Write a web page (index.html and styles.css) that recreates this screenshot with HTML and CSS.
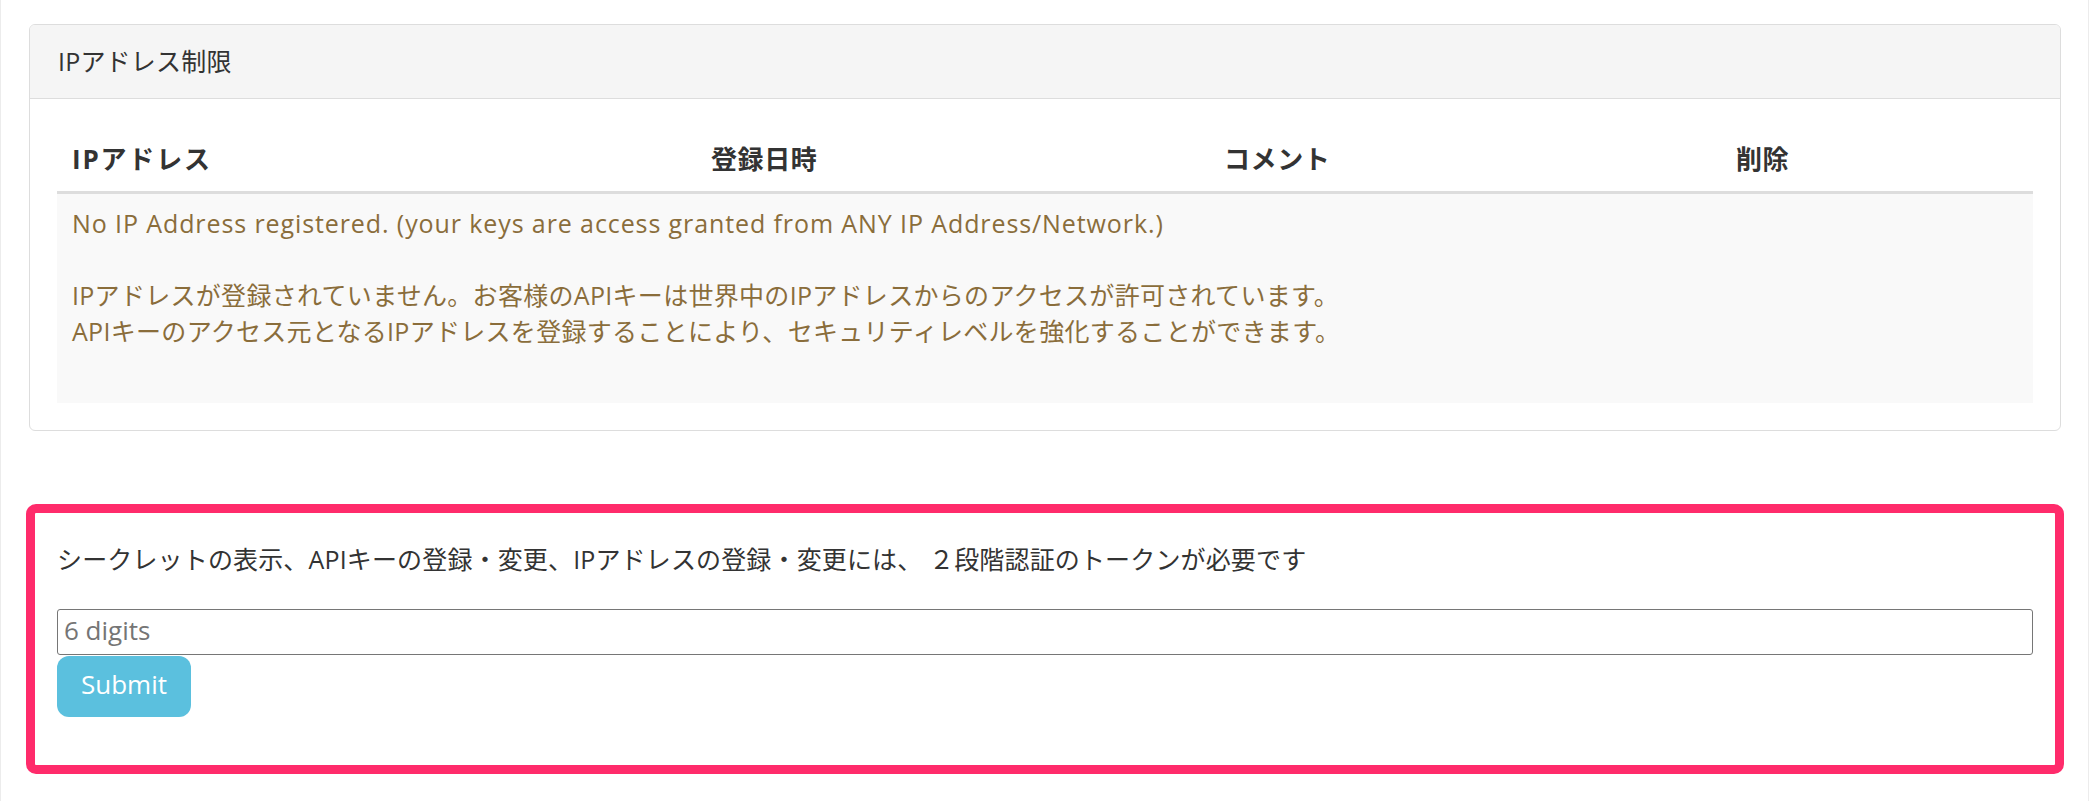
FILE: index.html
```html
<!DOCTYPE html>
<html lang="ja">
  <head>
    <meta charset="utf-8">
    <title>IPアドレス制限</title>
    <link rel="stylesheet" href="styles.css">
  </head>
  <body>
    <div class="page">
      <div class="panel">
        <div class="panel-heading">IPアドレス制限</div>
        <div class="panel-body">
          <table class="ip-table">
            <colgroup>
              <col class="col-ip">
              <col class="col-date">
              <col class="col-comment">
              <col>
            </colgroup>
            <thead>
              <tr>
                <th class="th-ip">IPアドレス</th>
                <th>登録日時</th>
                <th>コメント</th>
                <th>削除</th>
              </tr>
            </thead>
            <tbody>
              <tr>
                <td colspan="4" class="empty"><span class="en">No IP Address registered. (your keys are access granted from ANY IP Address/Network.)</span><br><br>IPアドレスが登録されていません。お客様のAPIキーは世界中のIPアドレスからのアクセスが許可されています。<br>APIキーのアクセス元となるIPアドレスを登録することにより、セキュリティレベルを強化することができます。</td>
              </tr>
            </tbody>
          </table>
        </div>
      </div>

      <form class="otp-box" onsubmit="return false">
        <p class="otp-note">シークレットの表示、APIキーの登録・変更、IPアドレスの登録・変更には、 ２段階認証のトークンが必要です</p>
        <input class="otp-input" type="text" placeholder="6 digits">
        <button class="btn-submit" type="submit">Submit</button>
      </form>
    </div>
  </body>
</html>
```

FILE: styles.css
```css
* {
  box-sizing: border-box;
}

html, body {
  margin: 0;
  padding: 0;
  background: #fff;
}

body {
  font-family: "Open Sans", "Noto Sans CJK JP", sans-serif;
  font-size: 25px;
  line-height: 36px;
  letter-spacing: 0.3px;
  color: #333;
}

.page {
  width: 2089px;
  min-height: 801px;
  padding-top: 24px;
  border-left: 1px solid #ececec;
  border-right: 1px solid #ececec;
}

/* panel */
.panel {
  margin: 0 27px 0 28px;
  border: 1px solid #ddd;
  border-radius: 6px;
  background: #fff;
}

.panel-heading {
  padding: 18px 28px 19px;
  background: #f5f5f5;
  border-bottom: 1px solid #ddd;
  border-radius: 5px 5px 0 0;
  letter-spacing: 0.2px;
}

.panel-body {
  padding: 28px 27px 27px;
}

.ip-table {
  width: 100%;
  table-layout: fixed;
  border-collapse: collapse;
}

.col-ip { width: 639px; }
.col-date { width: 513px; }
.col-comment { width: 512px; }

.ip-table th {
  padding: 14px 15px;
  text-align: left;
  font-size: 26px;
  font-weight: bold;
  letter-spacing: 0.6px;
  border-bottom: 3px solid #ddd;
}

.ip-table th.th-ip {
  letter-spacing: 1.8px;
}

.ip-table td.empty {
  padding: 11px 15px 54px;
  background: #f9f9f9;
  color: #8a6d3b;
}

.en {
  letter-spacing: 0.9px;
}

/* 2fa box */
.otp-box {
  margin: 73px 24px 0 25px;
  padding: 28px 22px 48px;
  border: 9px solid #ff2b6b;
  border-radius: 10px;
}

.otp-note {
  margin: 0 0 32px;
  letter-spacing: 0.15px;
}

.otp-input {
  display: block;
  width: 100%;
  height: 46px;
  padding: 0 6px 4px;
  border: 1px solid #767676;
  border-radius: 3px;
  font-family: "Open Sans", sans-serif;
  font-size: 26px;
  color: #333;
}

.otp-input::placeholder {
  color: #757575;
}

.btn-submit {
  display: block;
  margin-top: 1px;
  width: 134px;
  height: 61px;
  padding: 0 0 5px;
  border: none;
  border-radius: 12px;
  background: #5bc0de;
  color: #fff;
  font-family: "Open Sans", sans-serif;
  font-size: 26px;
}
```
